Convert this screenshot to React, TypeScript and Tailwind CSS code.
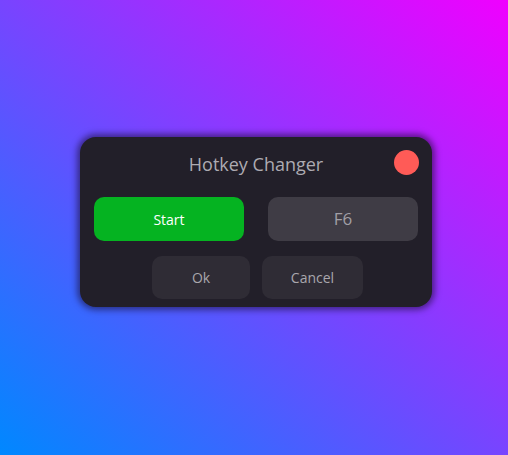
import React from "react";

export default function App() {
  return (
    <div
      className="w-[508px] h-[455px] bg-[linear-gradient(to_top_right,#0088ff,#f000ff)] pt-[137px] pl-[80px]"
      style={{ fontFamily: '"Open Sans", "Noto Sans", sans-serif' }}
    >
      <div className="w-[352px] h-[170px] rounded-[16px] bg-[#221f29] shadow-[0_0_6px_3px_rgba(20,10,40,0.55)] pt-[13px] pb-[8px] flex flex-col">
        <div className="flex items-center justify-between px-[13px] h-[25px]">
          <div className="w-[25px] h-[25px]" />
          <div className="text-[18px] leading-none text-[#adabb2] mt-[2px]">Hotkey Changer</div>
          <div className="w-[25px] h-[25px] rounded-full bg-[#ff5b57]" />
        </div>
        <div className="flex gap-[24px] px-[14px] mt-[22px]">
          <button className="w-[150px] h-[44px] rounded-[10px] bg-[#05b321] text-white text-[14px] font-medium">
            Start
          </button>
          <button className="w-[150px] h-[44px] rounded-[10px] bg-[#3f3c45] text-[#a19fa6] text-[17px]">
            F6
          </button>
        </div>
        <div className="flex gap-[12px] justify-center mt-[15px] pl-[3px]">
          <button className="w-[98px] h-[43px] rounded-[10px] bg-[#2f2c35] text-[#a9a7ad] text-[14px]">
            Ok
          </button>
          <button className="w-[101px] h-[43px] rounded-[10px] bg-[#2f2c35] text-[#a9a7ad] text-[14px]">
            Cancel
          </button>
        </div>
      </div>
    </div>
  );
}
